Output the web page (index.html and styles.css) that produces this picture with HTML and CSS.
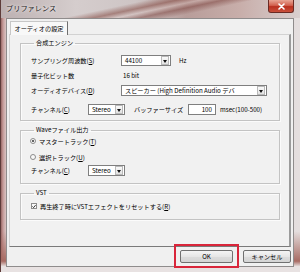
FILE: index.html
```html
<!DOCTYPE html>
<html lang="ja">
<head>
    <meta charset="UTF-8">
    <title>プリファレンス</title>
    <link rel="stylesheet" href="styles.css">
</head>
<body>
    <div class="window">
        <div class="titlebar">
            <span class="title">プリファレンス</span>
            <div class="close">
                <svg width="9" height="7" viewBox="0 0 9 7"><path d="M2 1 L7 6 M7 1 L2 6" stroke="#fff" stroke-width="1.6" stroke-linecap="round"/></svg>
            </div>
        </div>

        <div class="client">
            <div class="tabs">
                <div class="tab">オーディオの設定</div>
            </div>

            <div class="panel">
                <fieldset class="group">
                    <legend>合成エンジン</legend>
                    <div class="row">
                        <span class="label wide">サンプリング周波数(<u>S</u>)</span>
                        <div class="combo w-rate"><span class="value">44100</span><span class="arrow"></span></div>
                        <span class="unit">Hz</span>
                    </div>
                    <div class="row">
                        <span class="label wide">量子化ビット数</span>
                        <span class="static">16 bit</span>
                    </div>
                    <div class="row">
                        <span class="label wide">オーディオデバイス(<u>D</u>)</span>
                        <div class="combo w-device"><span class="value">スピーカー (High Definition Audio デバ</span><span class="arrow"></span></div>
                    </div>
                    <div class="row row-last">
                        <span class="label short">チャンネル(<u>C</u>)</span>
                        <div class="combo w-channel"><span class="value">Stereo</span><span class="arrow"></span></div>
                        <span class="buffer-label">バッファーサイズ</span>
                        <div class="textbox">100</div>
                        <span class="unit-ms">msec(100-500)</span>
                    </div>
                </fieldset>

                <fieldset class="group group-wave">
                    <legend>Waveファイル出力</legend>
                    <div class="row">
                        <span class="radio checked"></span>
                        <span>マスタートラック(<u>T</u>)</span>
                    </div>
                    <div class="row">
                        <span class="radio"></span>
                        <span>選択トラック(<u>U</u>)</span>
                    </div>
                    <div class="row row-channel">
                        <span class="label short">チャンネル(<u>C</u>)</span>
                        <div class="combo w-channel"><span class="value">Stereo</span><span class="arrow"></span></div>
                    </div>
                </fieldset>

                <fieldset class="group group-vst">
                    <legend>VST</legend>
                    <div class="row">
                        <span class="checkbox">
                            <svg width="5" height="5" viewBox="0 0 5 5"><path d="M0.6 2.4 L2 3.9 L4.5 0.8" fill="none" stroke="#222" stroke-width="1.1"/></svg>
                        </span>
                        <span>再生終了時にVSTエフェクトをリセットする(<u>R</u>)</span>
                    </div>
                </fieldset>
            </div>

            <div class="buttons">
                <button class="btn btn-ok">OK</button>
                <button class="btn btn-cancel">キャンセル</button>
            </div>
        </div>
    </div>
</body>
</html>
```

FILE: styles.css
```css
* {
    margin: 0;
    padding: 0;
    box-sizing: border-box;
}

body {
    width: 300px;
    height: 272px;
    overflow: hidden;
    font-family: "Noto Sans CJK JP", "Liberation Sans", sans-serif;
    font-size: 6.2px;
    color: #000;
}

/* window frame (aero glass look) */
.window {
    width: 300px;
    height: 272px;
    padding: 0 6px 5px 5px;
    display: flex;
    flex-direction: column;
    background:
        linear-gradient(to bottom, transparent 85%, #a86b63 96%, #e8e2e2 98%),
        linear-gradient(to right, #9a6a68 0, #c49a98 2px, #d9c4c3 5px, #e4dede 100%);
    border-left: 1px solid #5e3c3a;
}

.titlebar {
    height: 18px;
    margin: 0 -6px 0 -5px;
    padding-left: 5px;
    display: flex;
    align-items: center;
    position: relative;
    background:
        linear-gradient(168deg, transparent 38%, rgba(130, 70, 62, 0.55) 46%, rgba(220, 190, 185, 0.3) 52%, rgba(120, 60, 55, 0.5) 58%, transparent 66%),
        linear-gradient(to right, #bcb0b1, #d5cdcd 25%, #cec5c5 45%, #b89d9a 62%, #c8aeaa 80%, #d9cfcf);
}

.title {
    font-size: 7.2px;
    color: #1a1a1a;
    text-shadow: 0 0 4px #f4eeee, 0 0 2px #f4eeee;
    margin-top: -2px;
}

.close {
    position: absolute;
    right: 6px;
    top: 0;
    width: 26px;
    height: 13px;
    border: 1px solid #6a2a24;
    border-top: none;
    border-radius: 0 0 3px 3px;
    background: linear-gradient(#e8a594, #d2614f 45%, #b9301f 55%, #c9503c);
    display: flex;
    align-items: center;
    justify-content: center;
}

.client {
    flex: 1;
    background: #f0f0f0;
    border: 1px solid #8f8c8c;
    padding: 2px 0 0 0;
    display: flex;
    flex-direction: column;
}

/* tab */
.tabs {
    display: flex;
    padding-left: 3px;
}

.tab {
    width: 58px;
    height: 14px;
    margin-bottom: -1px;
    background: #f8f8f8;
    border: 1px solid #c7c7c7;
    border-right-color: #6f6f6f;
    border-bottom: none;
    display: flex;
    align-items: center;
    justify-content: center;
    position: relative;
}

.panel {
    flex: 1;
    margin: 0 2px 0 2px;
    border: 1px solid #d2d2d2;
    border-right: 2px solid #9b9b9b;
    border-bottom: 1px solid #7a7a7a;
    background: #f1f1f1;
    padding: 4px 9px 0 10px;
}

/* group boxes */
.group {
    border: 1px solid #c3c3c3;
    box-shadow: inset 1px 1px 0 #fbfbfb, 1px 1px 0 #fbfbfb;
    padding: 7px 0 5px 10px;
    min-width: 0;
}

.group legend {
    line-height: 8px;
    padding: 0 2px;
    margin-left: 3px;
}

.group-wave {
    margin-top: 5px;
    padding-top: 1px;
    padding-bottom: 7px;
}

.group-vst {
    margin-top: 5px;
    padding-top: 3px;
    padding-bottom: 7px;
}

.row {
    height: 12px;
    display: flex;
    align-items: center;
    margin-top: 3px;
    white-space: nowrap;
}

.row:first-of-type {
    margin-top: 0;
}

.row-last {
    margin-top: 7px;
}

.group-wave .row {
    margin-top: 4px;
}

.group-wave .row:first-of-type {
    margin-top: 0;
}

.group-wave .row-channel {
    margin-top: 1px;
}

.label.wide {
    width: 90px;
}

.label.short {
    width: 57px;
}

/* combo boxes */
.combo {
    height: 11px;
    background: #fff;
    border: 1px solid #7f7f7f;
    display: flex;
    align-items: center;
    overflow: hidden;
}

.combo .value {
    flex: 1;
    padding-left: 3px;
    overflow: hidden;
}

.combo .arrow {
    width: 8px;
    height: 9px;
    margin-right: 1px;
    background: linear-gradient(#fafafa, #e2e2e2);
    border: 1px solid #b9b9b9;
    position: relative;
}

.combo .arrow::after {
    content: "";
    position: absolute;
    left: 1px;
    top: 3px;
    border-left: 2.5px solid transparent;
    border-right: 2.5px solid transparent;
    border-top: 3px solid #111;
}

.w-rate {
    width: 50px;
}

.w-device {
    width: 146px;
}

.w-channel {
    width: 37px;
}

.unit {
    margin-left: 8px;
}

.static {
    padding-left: 2px;
}

.buffer-label {
    margin-left: 9px;
    width: 54px;
}

.textbox {
    width: 28px;
    height: 11px;
    background: #fff;
    border: 1px solid #7f7f7f;
    text-align: right;
    padding-right: 3px;
    line-height: 9px;
}

.unit-ms {
    margin-left: 4px;
}

/* radios and checkbox */
.radio {
    width: 6px;
    height: 6px;
    border: 1px solid #8c8c8c;
    border-radius: 50%;
    background: #f8f8f8;
    margin-right: 3px;
    margin-left: -1px;
    position: relative;
}

.radio.checked::after {
    content: "";
    position: absolute;
    left: 1px;
    top: 1px;
    width: 2px;
    height: 2px;
    border-radius: 50%;
    background: #333;
}

.checkbox {
    width: 6px;
    height: 6px;
    border: 1px solid #8c8c8c;
    background: #fafafa;
    margin-right: 3px;
    display: flex;
    align-items: center;
    justify-content: center;
}

/* dialog buttons */
.buttons {
    height: 19px;
    display: flex;
    justify-content: flex-end;
    gap: 10px;
    padding: 3px 2px 0 0;
}

.btn {
    height: 13px;
    font-family: inherit;
    font-size: 6.2px;
    color: #000;
    background: linear-gradient(#f4f4f4, #e6e6e6 50%, #dcdcdc 51%, #d4d4d4);
    border: 1px solid #707070;
    border-radius: 2px;
}

.btn-ok {
    width: 53px;
    position: relative;
}

/* red highlight drawn round the OK button */
.btn-ok::after {
    content: "";
    position: absolute;
    left: -7px;
    right: -7px;
    top: -7px;
    bottom: -6px;
    border: 2px solid #d9253a;
}

.btn-cancel {
    width: 48px;
}
```
